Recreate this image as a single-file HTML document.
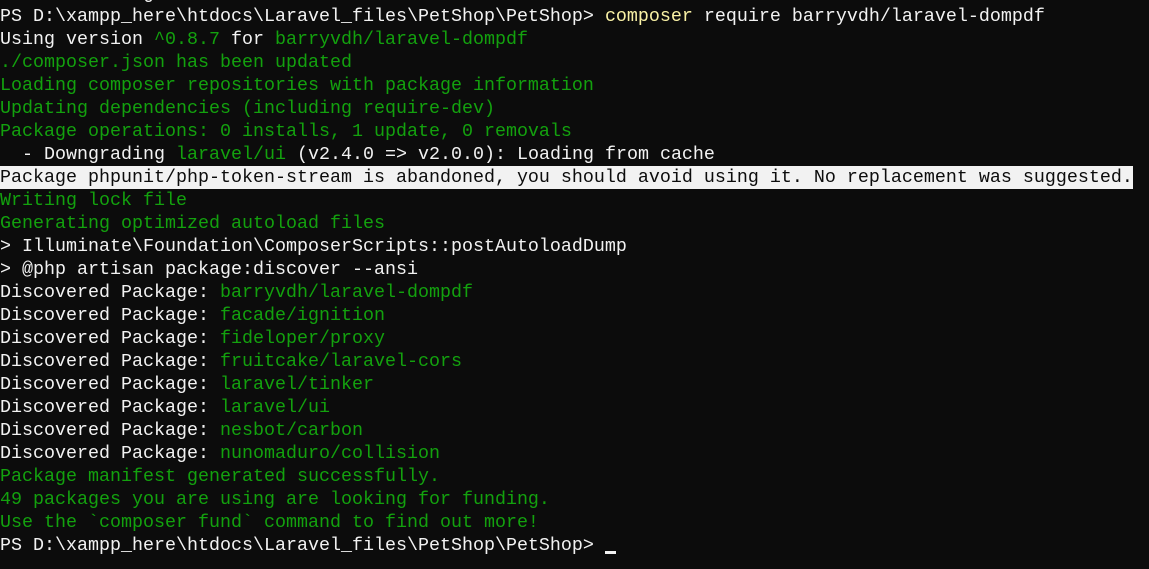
<!DOCTYPE html>
<html><head><meta charset="utf-8"><style>
html,body{margin:0;padding:0;background:#0c0c0c;width:1149px;height:569px;overflow:hidden}
pre{margin:0;position:absolute;left:0;top:-18px;font-family:"Liberation Mono",monospace;font-size:18.33px;line-height:23px;color:#cccccc;white-space:pre}
.w{color:#f2f2f2}.g{color:#13a10e}.y{color:#f9f1a5}
.hl{background:#f2f2f2;color:#0c0c0c;display:inline-block;width:1133px}
.cur{display:inline-block;width:11px;height:3px;background:#f2f2f2;vertical-align:-4px}
</style></head><body><pre><span class="w">  - Installing ...</span>
<span class="w">PS D:\xampp_here\htdocs\Laravel_files\PetShop\PetShop&gt; </span><span class="y">composer</span><span class="w"> require barryvdh/laravel-dompdf</span>
<span class="w">Using version </span><span class="g">^0.8.7</span><span class="w"> for </span><span class="g">barryvdh/laravel-dompdf</span>
<span class="g">./composer.json has been updated</span>
<span class="g">Loading composer repositories with package information</span>
<span class="g">Updating dependencies (including require-dev)</span>
<span class="g">Package operations: 0 installs, 1 update, 0 removals</span>
<span class="w">  - Downgrading </span><span class="g">laravel/ui</span><span class="w"> (v2.4.0 =&gt; v2.0.0): Loading from cache</span>
<span class="hl">Package phpunit/php-token-stream is abandoned, you should avoid using it. No replacement was suggested.</span>
<span class="g">Writing lock file</span>
<span class="g">Generating optimized autoload files</span>
<span class="w">&gt; Illuminate\Foundation\ComposerScripts::postAutoloadDump</span>
<span class="w">&gt; @php artisan package:discover --ansi</span>
<span class="w">Discovered Package: </span><span class="g">barryvdh/laravel-dompdf</span>
<span class="w">Discovered Package: </span><span class="g">facade/ignition</span>
<span class="w">Discovered Package: </span><span class="g">fideloper/proxy</span>
<span class="w">Discovered Package: </span><span class="g">fruitcake/laravel-cors</span>
<span class="w">Discovered Package: </span><span class="g">laravel/tinker</span>
<span class="w">Discovered Package: </span><span class="g">laravel/ui</span>
<span class="w">Discovered Package: </span><span class="g">nesbot/carbon</span>
<span class="w">Discovered Package: </span><span class="g">nunomaduro/collision</span>
<span class="g">Package manifest generated successfully.</span>
<span class="g">49 packages you are using are looking for funding.</span>
<span class="g">Use the `composer fund` command to find out more!</span>
<span class="w">PS D:\xampp_here\htdocs\Laravel_files\PetShop\PetShop&gt; </span><span class="cur"></span>
</pre></body></html>
